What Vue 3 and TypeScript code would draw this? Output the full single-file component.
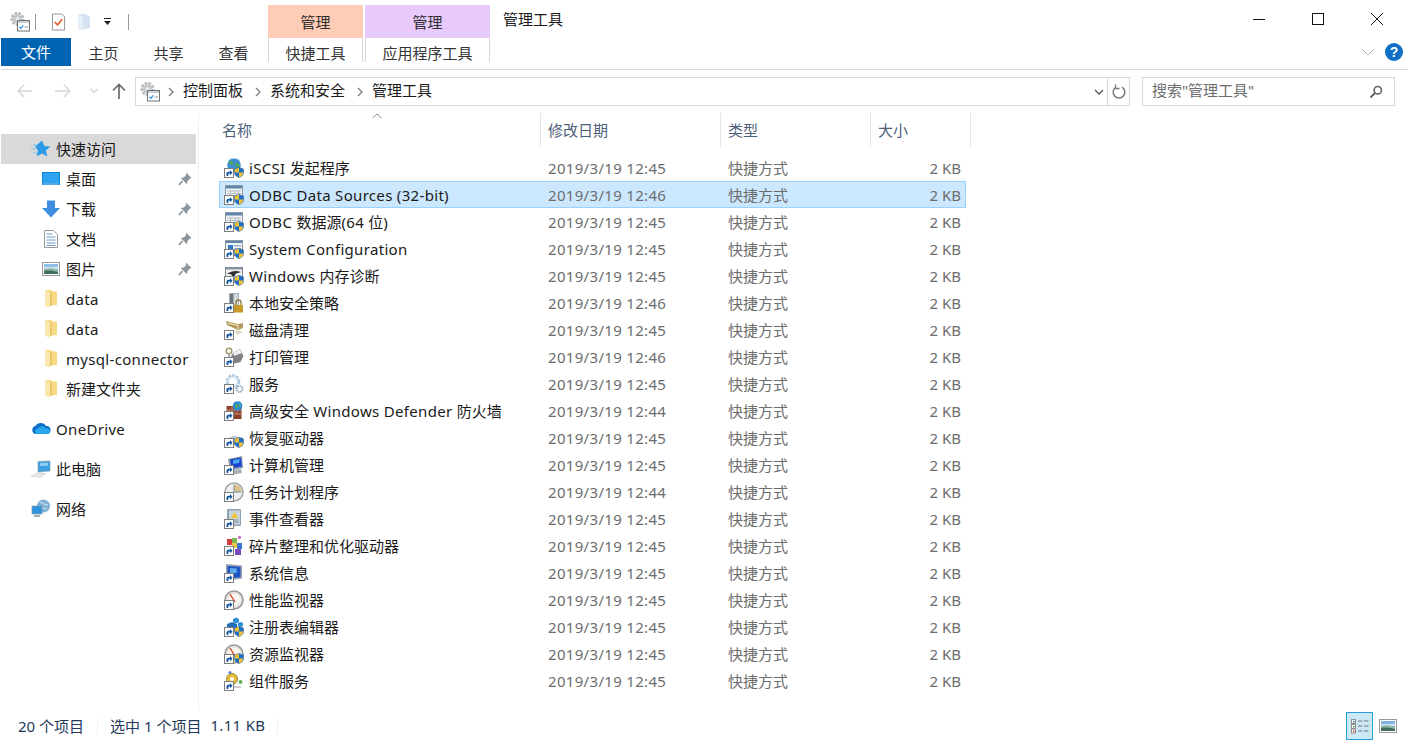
<template>
  <div class="window">
    <!-- shared icon shapes -->
    <svg class="defs" width="0" height="0">
      <defs>
        <symbol id="gear" viewBox="0 0 20 20">
          <circle cx="7.500" cy="7" r="5.600" fill="none" stroke="#b4b7ba" stroke-width="2.800" stroke-dasharray="2.600 1.200" />
          <circle cx="7.500" cy="7" r="4.600" fill="#c5c8ca" />
          <circle cx="7.500" cy="7" r="2" fill="#eceded" />
          <rect x="7.500" y="8.500" width="12" height="10.500" fill="#fcfcfc" stroke="#707274" />
          <rect x="8" y="9" width="11" height="2" fill="#c9ced2" />
          <path d="M9.500 15l1.300 1.300 2.400-3" fill="none" stroke="#2b8fe0" stroke-width="1.200" />
          <path d="M14.500 15h3.500" stroke="#9a9a9a" />
        </symbol>
        <symbol id="folder" viewBox="0 0 20 20">
          <path d="M4 1h6l2 1.500h4v13.500l-7 .5z" fill="#f8da85" />
          <path d="M4 1l5 2.500v15L4 17z" fill="#fbe8ae" />
          <path d="M9 3.500h1.500v13.500H9z" fill="#e8c261" />
        </symbol>
        <symbol id="pin" viewBox="0 0 14 14">
          <path d="M8 .5l5.500 5.500-1.800.8-2.300 2.400-.4 3-6.300-6.300 3-.4 2.400-2.300z" fill="#8b959e" />
          <path d="M4.500 9L1 13" stroke="#8b959e" stroke-width="1.800" />
        </symbol>
        <symbol id="arrow" viewBox="0 0 10 10">
          <rect x=".5" y=".5" width="9" height="9" fill="#fff" stroke="#7d7d7d" />
          <path d="M2.500 8V5.800C2.500 4.400 3.500 3.800 5 3.800h1V2l2.500 2.700L6 7.300V5.500H5.200C4.400 5.500 4.300 6.200 4.300 8z" fill="#14559f" />
        </symbol>
        <symbol id="shield" viewBox="0 0 10 11">
          <path d="M5 .5l4.500 1.500v3.500C9.500 8 7.500 9.800 5 10.500 2.500 9.800.5 8 .5 5.500V2z" fill="#1f6fc4" stroke="#3e6b99" stroke-width=".6" />
          <path d="M5 .8V5.400H.8V2.200zM5 5.400h4.200C9 8 7.300 9.700 5 10.200z" fill="#f2c230" />
        </symbol>
        <symbol id="win" viewBox="0 0 20 20">
          <rect x="1.500" y=".5" width="17" height="16" fill="#f3f5f7" stroke="#8a96a2" />
          <rect x="2" y="1" width="16" height="2.500" fill="#5f86ad" />
          <path d="M3 6h14M3 8.500h14M3 11h14M6.500 5v8M11 5v8M14.500 5v8" stroke="#b7bec6" />
        </symbol>
      </defs>
    </svg>

    <header class="title-row">
      <div class="qat">
        <svg class="qat-gear"><use href="#gear" /></svg>
        <span class="qat-sep first"></span>
        <svg class="qat-check" viewBox="0 0 16 18">
          <path d="M1.500.5h10l3 3v14h-13z" fill="#fff" stroke="#8e8e8e" />
          <path d="M4 9l3 3 5-6" fill="none" stroke="#e8541e" stroke-width="1.600" />
        </svg>
        <svg class="qat-folder" viewBox="0 0 14 18">
          <path d="M1 1h8l4 3v11l-9 2-3-1z" fill="#d5e2f1" />
          <path d="M1 1l5 3v13l-5-1z" fill="#e6eef8" />
        </svg>
        <svg class="qat-drop" viewBox="0 0 7 7">
          <path d="M0 0h7v1H0zM0 3h7L3.500 7z" fill="#222" />
        </svg>
        <span class="qat-sep"></span>
      </div>
      <div class="ctx peach">管理</div>
      <div class="ctx lilac">管理</div>
      <div class="win-title">管理工具</div>
      <div class="win-btns">
        <svg viewBox="0 0 14 14"><path d="M1 7.500h12" stroke="#111" /></svg>
        <svg viewBox="0 0 14 14"><rect x="1.500" y="1.500" width="11" height="11" fill="none" stroke="#111" /></svg>
        <svg viewBox="0 0 14 14"><path d="M1 1l12 12M13 1L1 13" stroke="#111" /></svg>
      </div>
    </header>

    <nav class="ribbon">
      <div class="file-tab">文件</div>
      <div v-for="t in ribbonTabs" :key="t" class="r-tab">{{ t }}</div>
      <div class="ctx-tab peach-w">快捷工具</div>
      <div class="ctx-tab lilac-w">应用程序工具</div>
      <div class="ribbon-end">
        <svg class="collapse" viewBox="0 0 14 8"><path d="M1 1l6 6 6-6" fill="none" stroke="#b4b4b4" /></svg>
        <div class="help">?</div>
      </div>
    </nav>

    <div class="navbar">
      <div class="nav-btns">
        <svg class="n-back" viewBox="0 0 16 14"><path d="M1 7h14M7 1L1 7l6 6" fill="none" stroke="#d6d6d6" stroke-width="1.400" /></svg>
        <svg class="n-fwd" viewBox="0 0 16 14"><path d="M0 7h14M9 1l6 6-6 6" fill="none" stroke="#d6d6d6" stroke-width="1.400" /></svg>
        <svg class="n-drop" viewBox="0 0 8 6"><path d="M.5 1L4 4.500 7.500 1" fill="none" stroke="#d0d0d0" stroke-width="1.200" /></svg>
        <svg class="n-up" viewBox="0 0 14 16"><path d="M7 16V2M1 7.500L7 1.500l6 6" fill="none" stroke="#6a6a6a" stroke-width="1.700" /></svg>
      </div>
      <div class="addr">
        <svg class="addr-ico"><use href="#gear" /></svg>
        <template v-for="c in crumbs" :key="c">
          <svg class="crumb-sep" viewBox="0 0 6 10"><path d="M1 1l4 4-4 4" fill="none" stroke="#7b7b7b" stroke-width="1.300" /></svg>
          <span class="crumb">{{ c }}</span>
        </template>
        <svg class="addr-drop" viewBox="0 0 10 6"><path d="M1 1l4 4 4-4" fill="none" stroke="#555" stroke-width="1.300" /></svg>
        <div class="refresh">
          <svg viewBox="0 0 14 15"><path d="M4 3.200A5.800 5.800 0 1 0 10 3.200" fill="none" stroke="#7a7a7a" stroke-width="1.500" /><path d="M3.500 .5v4h4" fill="none" stroke="#7a7a7a" stroke-width="1.300" /></svg>
        </div>
      </div>
      <div class="search">
        <span>搜索"管理工具"</span>
        <svg viewBox="0 0 14 14"><circle cx="8.800" cy="5.200" r="3.700" fill="none" stroke="#666" stroke-width="1.600" /><path d="M6 8L1.500 12.500" stroke="#666" stroke-width="2" /></svg>
      </div>
    </div>

    <main class="body">
      <aside class="side">
        <div v-for="n in sideItems" :key="n.key" class="s-item" :class="{ active: n.active, sub: n.sub, gapped: n.gapped }">
          <svg class="s-ico" viewBox="0 0 20 20" v-html="n.icon"></svg>
          <span class="s-label" :class="isAscii(n.label) ? 'latin' : 'cjk'">{{ n.label }}</span>
          <svg v-if="n.pinned" class="s-pin"><use href="#pin" /></svg>
        </div>
      </aside>

      <section class="list">
        <div class="l-head">
          <div class="h-cell h-name">名称
            <svg class="sort" viewBox="0 0 10 6"><path d="M.5 5L5 1l4.500 4" fill="none" stroke="#8a8a8a" /></svg>
          </div>
          <div class="h-cell">修改日期</div>
          <div class="h-cell">类型</div>
          <div class="h-cell">大小</div>
        </div>
        <div v-for="f in files" :key="f.name" class="row" :class="{ sel: f.sel }">
          <div class="c-name">
            <span class="f-ico">
              <svg class="f-art" viewBox="0 0 20 20" v-html="art[f.icon]"></svg>
              <svg v-if="f.shield" class="f-shield"><use href="#shield" /></svg>
              <svg class="f-arrow"><use href="#arrow" /></svg>
            </span>
            <span class="f-text"><span v-for="(s, i) in splitRuns(f.name)" :key="i" :class="{ latin: isAscii(s) }">{{ s }}</span></span>
          </div>
          <div class="c-date latin">{{ f.date }}</div>
          <div class="c-type">快捷方式</div>
          <div class="c-size">2 KB</div>
        </div>
      </section>
    </main>

    <footer class="status">
      <span class="st-a">20 个项目</span>
      <span class="st-sep"></span>
      <span class="st-b">选中 1 个项目</span>
      <span class="st-c latin">1.11 KB</span>
      <span class="st-sep two"></span>
      <div class="views">
        <div class="v-btn on">
          <svg viewBox="0 0 20 16">
            <g fill="#fff" stroke="#8f8f8f">
              <rect x="1.500" y="1.500" width="4" height="4" />
              <rect x="1.500" y="6.500" width="4" height="4" />
              <rect x="1.500" y="11" width="4" height="4" />
            </g>
            <rect x="3" y="3" width="1.500" height="1.500" fill="#2b7d9e" />
            <rect x="3" y="8" width="1.500" height="1.500" fill="#3a8f4a" />
            <rect x="3" y="12.500" width="1.500" height="1.500" fill="#c8281e" />
            <path d="M8 3h4.500M14 3h4.500M8 8h4.500M14 8h4.500M8 13h4.500M14 13h4.500" stroke="#777" />
          </svg>
        </div>
        <svg class="v-pic" viewBox="0 0 18 14">
          <rect x=".5" y=".5" width="17" height="13" fill="#fff" stroke="#9a9a9a" />
          <rect x="2" y="2" width="14" height="10" fill="#7db4e6" />
          <path d="M2 5h14v2H2z" fill="#cfe3f2" />
          <path d="M2 7c4-1 9-1 14 1v4H2z" fill="#8fb5a5" />
          <path d="M2 9c5-1 10 0 14 1v2H2z" fill="#3f6e5c" />
        </svg>
      </div>
    </footer>
  </div>
</template>

<script setup lang="ts">
const ribbonTabs = ['主页', '共享', '查看']
const crumbs = ['控制面板', '系统和安全', '管理工具']

// latin runs are a little wider in the original font, so they get their own spacing
const isAscii = (s: string) => /^[\x00-\x7f]+$/.test(s)
const splitRuns = (s: string) => s.match(/[\x00-\x7f]+|[^\x00-\x7f]+/g) ?? []

interface SideItem {
  key: string
  label: string
  icon: string
  active?: boolean
  sub?: boolean
  pinned?: boolean
  gapped?: boolean
}

const folderIco = '<use href="#folder" />'

const sideItems: SideItem[] = [
  { key: 'quick', label: '快速访问', active: true, icon: '<path d="M11 1.500l2.400 5.600 6 .5-4.500 4 1.400 5.900-5.300-3.100-5.300 3.100 1.400-5.900L4 7.600z" fill="#2b9be8"/><path d="M2 6h5M0 10h5M2 14h4" stroke="#7cc4f2"/>' },
  { key: 'desk', label: '桌面', sub: true, pinned: true, icon: '<rect x="1" y="3" width="18" height="13" fill="#0c85dc"/><path d="M2 4h16v10H2z" fill="#2ea3f2"/><path d="M2 15h16" stroke="#fff" stroke-width=".6"/>' },
  { key: 'down', label: '下载', sub: true, pinned: true, icon: '<path d="M6 1.500h8V9h5l-9 9.500L1 9h5z" fill="#3f8fe0"/>' },
  { key: 'docs', label: '文档', sub: true, pinned: true, icon: '<path d="M3.500 1.500h9l4 4v13h-13z" fill="#fff" stroke="#9a9a9a"/><path d="M5.500 5h6M5.500 8h9M5.500 11h9M5.500 14h9M5.500 16.500h9" stroke="#6c98c4"/>' },
  { key: 'pics', label: '图片', sub: true, pinned: true, icon: '<rect x="1.500" y="3.500" width="17" height="13" fill="#fff" stroke="#9a9a9a"/><rect x="3" y="5" width="14" height="10" fill="#8cc0e8"/><path d="M3 8h14v2H3z" fill="#d3e6f3"/><path d="M3 10c5-1 10-1 14 1v4H3z" fill="#8fb5a5"/><path d="M3 12c5-1 10 0 14 1v2H3z" fill="#3f6e5c"/>' },
  { key: 'd1', label: 'data', sub: true, icon: folderIco },
  { key: 'd2', label: 'data', sub: true, icon: folderIco },
  { key: 'mysql', label: 'mysql-connector', sub: true, icon: folderIco },
  { key: 'newf', label: '新建文件夹', sub: true, icon: folderIco },
  { key: 'one', label: 'OneDrive', gapped: true, icon: '<path d="M5 15a4 4 0 0 1-.5-7.900A6 6 0 0 1 15 7a4 4 0 0 1 1 8z" fill="#0a6fc8"/><path d="M6 15a3 3 0 0 1 1-5.800 5 5 0 0 1 8 .3 3 3 0 0 1 4 3c0 1.500-1.200 2.500-3 2.500z" fill="#28a8ea"/>' },
  { key: 'pc', label: '此电脑', gapped: true, icon: '<path d="M7 2.500l12-.5v10l-12 1z" fill="#3b9fe0" stroke="#8aa0b0" stroke-width=".7"/><path d="M9 4l8-.3v3L9 7z" fill="#8fcdf5"/><path d="M0 17l7-3.500 8 1-6 4z" fill="#e3e6e8" stroke="#c5cacd" stroke-width=".5"/>' },
  { key: 'net', label: '网络', gapped: true, icon: '<circle cx="12.500" cy="7" r="6.500" fill="#7fb0d8"/><path d="M9 3c3 1 4 3 8 3M9 11c2-3 5-2 7-1" stroke="#d4e6f2" fill="none"/><rect x="1" y="7" width="10" height="8" fill="#2e96dd" stroke="#8798a6" stroke-width=".7"/><path d="M3 16h6v2H3z" fill="#a5acb2"/>' },
]

// artwork of each shortcut, without the arrow and shield drawn over it
const art: Record<string, string> = {
  globe: '<circle cx="10" cy="7" r="6.800" fill="#3b8fd0"/><path d="M5 3c3-1 5 1 4 3S5 7 5 3zM11 5c3 0 5 1 5 4-2 1-5 0-5-4z" fill="#57a55b"/><path d="M4 1.500C7-.5 14-.5 16 2" stroke="#cfe6f7" fill="none"/>',
  table: '<use href="#win"/>',
  config: '<rect x="1.500" y="1.500" width="17" height="15" fill="#f1f4f6" stroke="#8a96a2"/><rect x="2" y="2" width="16" height="2" fill="#5f86ad"/><rect x="4" y="6" width="5" height="5" fill="#2f78c8"/><rect x="10" y="6" width="7" height="1.500" fill="#9db3c8"/><rect x="10" y="9" width="7" height="1.500" fill="#9db3c8"/>',
  memory: '<rect x="1.500" y="1.500" width="17" height="15" fill="#eef0f2" stroke="#7e8a96"/><rect x="2" y="2" width="16" height="1.500" fill="#8b97a2"/><path d="M3 8c4-3 9-4 14-2l-3 1c-2 0-3 1-3 3H8c0-2-2-2-5-2z" fill="#333"/>',
  policy: '<rect x="5" y="0" width="10" height="17" fill="#a9b1b8"/><rect x="6" y="1" width="3" height="14" fill="#6b7680"/><rect x="10" y="1" width="4" height="14" fill="#d3d8dc"/><rect x="10" y="12" width="9" height="7.500" fill="#c69a2a"/><path d="M12 12V9.500a2.500 2.500 0 0 1 5 0V12" fill="none" stroke="#8a7a4a" stroke-width="1.300"/>',
  broom: '<path d="M2 1l12 3 5-1v5l-5 2L3 5z" fill="#b39a5c"/><path d="M4 3l10 2.500V9" fill="none" stroke="#e3d4a2" stroke-width="1.500"/><path d="M10 10l9 2-6 3z" fill="#dad6c4"/>',
  printer: '<path d="M8 7l9-3 2.500 5-3 6-8 2-2-5z" fill="#7f8388"/><path d="M9 6l7-4 2 4-8 3z" fill="#f4f4f4" stroke="#a0a0a0" stroke-width=".5"/><circle cx="5" cy="4" r="2.800" fill="none" stroke="#a09a6a" stroke-width="1.500"/><path d="M5 6.500v4.500" stroke="#a8a8a8" stroke-width="1.800"/>',
  services: '<circle cx="9" cy="7.500" r="5.800" fill="none" stroke="#a9c6de" stroke-width="3" stroke-dasharray="2.500 1.200"/><circle cx="9" cy="7.500" r="4.800" fill="none" stroke="#c8dceb" stroke-width="1.800"/><circle cx="15.500" cy="15" r="3" fill="none" stroke="#8faec6" stroke-width="2" stroke-dasharray="1.500 .8"/>',
  firewall: '<rect x="2.500" y="5" width="15" height="13" fill="#8c3f2b"/><path d="M3 9h14M3 13h14M8 5v4M13 9v4M8 13v4" stroke="#c98c6e"/><circle cx="13.500" cy="5" r="4.800" fill="#2f8bd0"/><path d="M11 3c2 0 3 1 3 3s-3 1-3-3zM15 2l2 3-2 1z" fill="#57b04f"/>',
  drive: '<path d="M2 11l8-3 9 2v5l-9 2-8-2z" fill="#8e959c"/><path d="M2 11l8-3 9 2-9 2z" fill="#c5cad0"/>',
  computer: '<path d="M4 4l14-3 1 12-13 2.500z" fill="#8c9aa8"/><path d="M6 4.500l11-2 .8 9-10 1.800z" fill="#1742d4"/><path d="M9 5l7-1-1 4-6 1z" fill="#4ca4ea"/><path d="M8 15l9-1 1 4-8 1.500z" fill="#a9b0b6"/>',
  clock: '<circle cx="10" cy="10" r="9" fill="#eef0f2" stroke="#a3a8ad" stroke-width="1.600"/><path d="M10 2.200A7.800 7.800 0 0 1 17.800 10H10z" fill="#dcc58c"/><path d="M10 3v7h7" fill="none" stroke="#7a8691"/>',
  book: '<rect x="3" y="0" width="14" height="17" rx="1" fill="#8fa2b3"/><rect x="5" y="1.500" width="11" height="14" fill="#c9d3dc"/><path d="M10.500 3l3.500 6H7z" fill="#f4c430"/><path d="M6 11h9M6 13h9" stroke="#84929f"/>',
  defrag: '<rect x="3" y="3" width="5" height="6" fill="#d83d3d"/><rect x="8" y="2" width="5" height="5" fill="#79b84b"/><rect x="13" y="7" width="5" height="6" fill="#3c76d0"/><rect x="8" y="7" width="5" height="5" fill="#e8c64a"/><rect x="14" y="0" width="3" height="3" fill="#d67ad0"/><rect x="11" y="13" width="6" height="6" fill="#7a4bc0"/>',
  sysinfo: '<path d="M2 1l16 1.500v13L2 18z" fill="#9aa4ae"/><path d="M3.500 3l13 .7v10.500l-13 1.500z" fill="#1d55c4"/><path d="M6 5l7 .5-.5 4.500-6.500.5z" fill="#5ea8ea"/>',
  gauge: '<circle cx="10" cy="10" r="9" fill="#e3e0d8" stroke="#999" stroke-width="1.500"/><circle cx="10" cy="10" r="6.500" fill="#f8f6f0"/><path d="M6 4l5 8" stroke="#d9452d" stroke-width="1.400"/>',
  cubes: '<path d="M3 7l5-2 5 2v7l-5 2-5-2z" fill="#1f6fb8"/><path d="M9 2l3-1.500L15 2v3l-3 1.500L9 5zM14 6l2.500-1L19 6v3l-2.500 1L14 9z" fill="#2d8fd6"/>',
  comserv: '<circle cx="8" cy="8" r="5.500" fill="#e5bf33" stroke="#9c8a40"/><circle cx="8" cy="8" r="2" fill="#fff"/><circle cx="6" cy="1.500" r="1.500" fill="#6a7fd0"/><circle cx="16.500" cy="11" r="2" fill="#66b05a"/><path d="M10 16h7" stroke="#bcbcbc" stroke-width="1.500"/>',
}

interface FileRow {
  name: string
  date: string
  icon: string
  shield?: boolean
  sel?: boolean
}

const files: FileRow[] = [
  { name: 'iSCSI 发起程序', date: '2019/3/19 12:45', icon: 'globe', shield: true },
  { name: 'ODBC Data Sources (32-bit)', date: '2019/3/19 12:46', icon: 'table', shield: true, sel: true },
  { name: 'ODBC 数据源(64 位)', date: '2019/3/19 12:45', icon: 'table', shield: true },
  { name: 'System Configuration', date: '2019/3/19 12:45', icon: 'config', shield: true },
  { name: 'Windows 内存诊断', date: '2019/3/19 12:45', icon: 'memory', shield: true },
  { name: '本地安全策略', date: '2019/3/19 12:46', icon: 'policy' },
  { name: '磁盘清理', date: '2019/3/19 12:45', icon: 'broom' },
  { name: '打印管理', date: '2019/3/19 12:46', icon: 'printer' },
  { name: '服务', date: '2019/3/19 12:45', icon: 'services' },
  { name: '高级安全 Windows Defender 防火墙', date: '2019/3/19 12:44', icon: 'firewall' },
  { name: '恢复驱动器', date: '2019/3/19 12:45', icon: 'drive', shield: true },
  { name: '计算机管理', date: '2019/3/19 12:45', icon: 'computer' },
  { name: '任务计划程序', date: '2019/3/19 12:44', icon: 'clock' },
  { name: '事件查看器', date: '2019/3/19 12:45', icon: 'book' },
  { name: '碎片整理和优化驱动器', date: '2019/3/19 12:45', icon: 'defrag' },
  { name: '系统信息', date: '2019/3/19 12:45', icon: 'sysinfo' },
  { name: '性能监视器', date: '2019/3/19 12:45', icon: 'gauge' },
  { name: '注册表编辑器', date: '2019/3/19 12:45', icon: 'cubes', shield: true },
  { name: '资源监视器', date: '2019/3/19 12:45', icon: 'gauge', shield: true },
  { name: '组件服务', date: '2019/3/19 12:45', icon: 'comserv' },
]
</script>

<style>
html, body {
  margin: 0;
  background: #fff;
}
</style>

<style scoped>
.window {
  width: 1408px;
  height: 742px;
  display: flex;
  flex-direction: column;
  overflow: hidden;
  background: #fff;
  font-family: "Noto Sans", "Noto Sans CJK SC", sans-serif;
  font-size: 15px;
  color: #1a1a1a;
}
.defs {
  position: absolute;
}
.latin {
  letter-spacing: 0.32px;
}

/* title row */
.title-row {
  height: 38px;
  display: flex;
  flex: none;
}
.qat {
  width: 268px;
  flex: none;
  display: flex;
  align-items: center;
  padding-top: 5px;
  box-sizing: border-box;
}
.qat-gear {
  width: 20px;
  height: 20px;
  margin-left: 10px;
}
.qat-sep {
  width: 1px;
  height: 16px;
  background: #9b9b9b;
  margin-left: 17px;
}
.qat-sep.first {
  margin-left: 5px;
}
.qat-check {
  width: 15px;
  height: 18px;
  margin-left: 15px;
}
.qat-folder {
  width: 14px;
  height: 18px;
  margin-left: 11px;
}
.qat-drop {
  width: 7px;
  height: 7px;
  margin-left: 13px;
}
.ctx {
  margin-top: 5px;
  display: flex;
  align-items: center;
  justify-content: center;
  color: #2f2f2f;
  flex: none;
  height: 33px;
}
.peach {
  width: 95px;
  background: #ffcdb5;
}
.lilac {
  width: 125px;
  margin-left: 2px;
  background: #e8c9fb;
}
.win-title {
  margin-left: 13px;
  line-height: 38px;
  color: #1a1a1a;
}
.win-btns {
  margin-left: auto;
  display: flex;
  gap: 45px;
  padding: 12px 24px 0 0;
}
.win-btns svg {
  width: 14px;
  height: 14px;
}

/* ribbon */
.ribbon {
  height: 32px;
  flex: none;
  display: flex;
  margin-left: 1px;
  box-sizing: border-box;
  border-bottom: 1px solid #dadada;
  padding-bottom: 3px;
}
.file-tab {
  width: 70px;
  background: #0063b1;
  color: #fff;
  text-align: center;
  line-height: 28px;
}
.r-tab {
  width: 65px;
  text-align: center;
  line-height: 30px;
  color: #333;
}
.ctx-tab {
  line-height: 30px;
  text-align: center;
  color: #333;
  box-sizing: border-box;
  border-left: 1px solid #d4d4d4;
  border-right: 1px solid #d4d4d4;
  height: 24px;
}
.peach-w {
  width: 95px;
  margin-left: 2px;
}
.lilac-w {
  width: 125px;
  margin-left: 2px;
}
.ribbon-end {
  margin-left: auto;
  display: flex;
  align-items: center;
  gap: 10px;
  padding-right: 5px;
}
.collapse {
  width: 14px;
  height: 8px;
}
.help {
  width: 18px;
  height: 18px;
  border-radius: 50%;
  background: #0f6fc6;
  color: #fff;
  text-align: center;
  font: bold 14px/18px "Liberation Sans", sans-serif;
}

/* address row */
.navbar {
  height: 43px;
  flex: none;
  display: flex;
  padding-top: 7px;
  box-sizing: border-box;
}
.nav-btns {
  width: 135px;
  flex: none;
  display: flex;
  align-items: center;
  height: 28px;
}
.n-back {
  width: 16px;
  height: 14px;
  margin-left: 17px;
  flex: none;
}
.n-fwd {
  width: 16px;
  height: 14px;
  margin-left: 22px;
  flex: none;
}
.n-drop {
  width: 8px;
  height: 6px;
  margin-left: 19px;
  flex: none;
}
.n-up {
  width: 14px;
  height: 16px;
  margin-left: 14px;
  flex: none;
}
.addr {
  width: 995px;
  height: 29px;
  flex: none;
  box-sizing: border-box;
  border: 1px solid #d9d9d9;
  display: flex;
  align-items: center;
}
.addr-ico {
  width: 20px;
  height: 20px;
  margin-left: 4px;
}
.crumb-sep {
  width: 6px;
  height: 10px;
  margin: 0 9px 0 8px;
}
.addr-ico + .crumb-sep {
  margin-left: 8px;
}
.crumb {
  color: #1a1a1a;
  margin-right: 4px;
  line-height: 25px;
  height: 27px;
}
.addr-drop {
  width: 10px;
  height: 6px;
  margin-left: auto;
  margin-right: 3px;
}
.refresh {
  width: 21px;
  height: 27px;
  border-left: 1px solid #d9d9d9;
  display: flex;
  align-items: center;
  justify-content: center;
}
.refresh svg {
  width: 14px;
  height: 15px;
}
.search {
  width: 253px;
  height: 29px;
  margin-left: 12px;
  box-sizing: border-box;
  border: 1px solid #d9d9d9;
  display: flex;
  align-items: center;
  justify-content: space-between;
  padding: 0 11px 0 9px;
  color: #6d6d6d;
  line-height: 25px;
}
.search span {
  height: 27px;
}
.search svg {
  width: 14px;
  height: 14px;
}

/* main area */
.body {
  flex: 1;
  min-height: 0;
  display: flex;
}
.side {
  width: 199px;
  flex: none;
  box-sizing: border-box;
  border-right: 1px solid #f0f0f0;
  padding-top: 21px;
  padding-left: 1px;
}
.s-item {
  width: 195px;
  height: 30px;
  display: flex;
  align-items: center;
  position: relative;
  padding-left: 30px;
  box-sizing: border-box;
}
.s-item.active {
  background: #d9d9d9;
}
.s-item.sub {
  padding-left: 40px;
}
.s-item.gapped {
  margin-top: 10px;
}
.s-ico {
  width: 20px;
  height: 20px;
  flex: none;
}
.s-label {
  margin-left: 5px;
}
.s-label.cjk {
  padding-bottom: 2px;
}
.s-pin {
  position: absolute;
  left: 177px;
  top: 8px;
  width: 14px;
  height: 14px;
}
.list {
  flex: 1;
  min-width: 0;
  padding-left: 20px;
}
.l-head {
  display: grid;
  grid-template-columns: 322px 180px 150px 100px;
  height: 33px;
  margin-bottom: 8px;
}
.h-cell {
  border-right: 1px solid #e5e5e5;
  padding-left: 7px;
  line-height: 34px;
  color: #4c607a;
  position: relative;
}
.h-name {
  padding-left: 3px;
}
.sort {
  position: absolute;
  left: 153px;
  top: 0;
  width: 10px;
  height: 6px;
}
.row {
  width: 747px;
  height: 27px;
  display: grid;
  grid-template-columns: 321px 180px 150px 96px;
  align-items: center;
  box-sizing: border-box;
  color: #6d6d6d;
}
.row.sel {
  background: #cce8ff;
  box-shadow: inset 0 0 0 1px #99d1ff;
}
.c-name {
  display: flex;
  align-items: center;
  color: #1a1a1a;
}
.f-ico {
  position: relative;
  width: 20px;
  height: 20px;
  margin-left: 5px;
  flex: none;
}
.f-art {
  width: 20px;
  height: 20px;
  display: block;
}
.f-arrow {
  position: absolute;
  left: 0;
  bottom: 0;
  width: 10px;
  height: 10px;
}
.f-shield {
  position: absolute;
  right: 0;
  bottom: 0;
  width: 10px;
  height: 11px;
}
.f-text {
  margin-left: 5px;
  white-space: nowrap;
}
.c-date,
.c-type {
  padding-left: 8px;
}
.c-size {
  text-align: right;
  padding-right: 5px;
}

/* status bar */
.status {
  height: 32px;
  flex: none;
  display: flex;
  align-items: center;
  color: #1e395b;
  padding-left: 18px;
}
.st-a,
.st-b,
.st-c {
  padding-bottom: 2px;
}
.st-a {
  width: 67px;
  white-space: nowrap;
}
.st-sep {
  width: 1px;
  height: 16px;
  background: #f0f0f0;
  margin: 0 12px;
}
.st-c {
  margin-left: 9px;
}
.views {
  margin-left: auto;
  display: flex;
  align-items: center;
  margin-right: 11px;
  gap: 6px;
}
.v-btn {
  width: 27px;
  height: 28px;
  box-sizing: border-box;
  border: 1px solid #26a0da;
  background: #cbe8f6;
  display: flex;
  align-items: center;
  justify-content: center;
}
.v-btn svg {
  width: 20px;
  height: 16px;
}
.v-pic {
  width: 18px;
  height: 14px;
}
</style>
